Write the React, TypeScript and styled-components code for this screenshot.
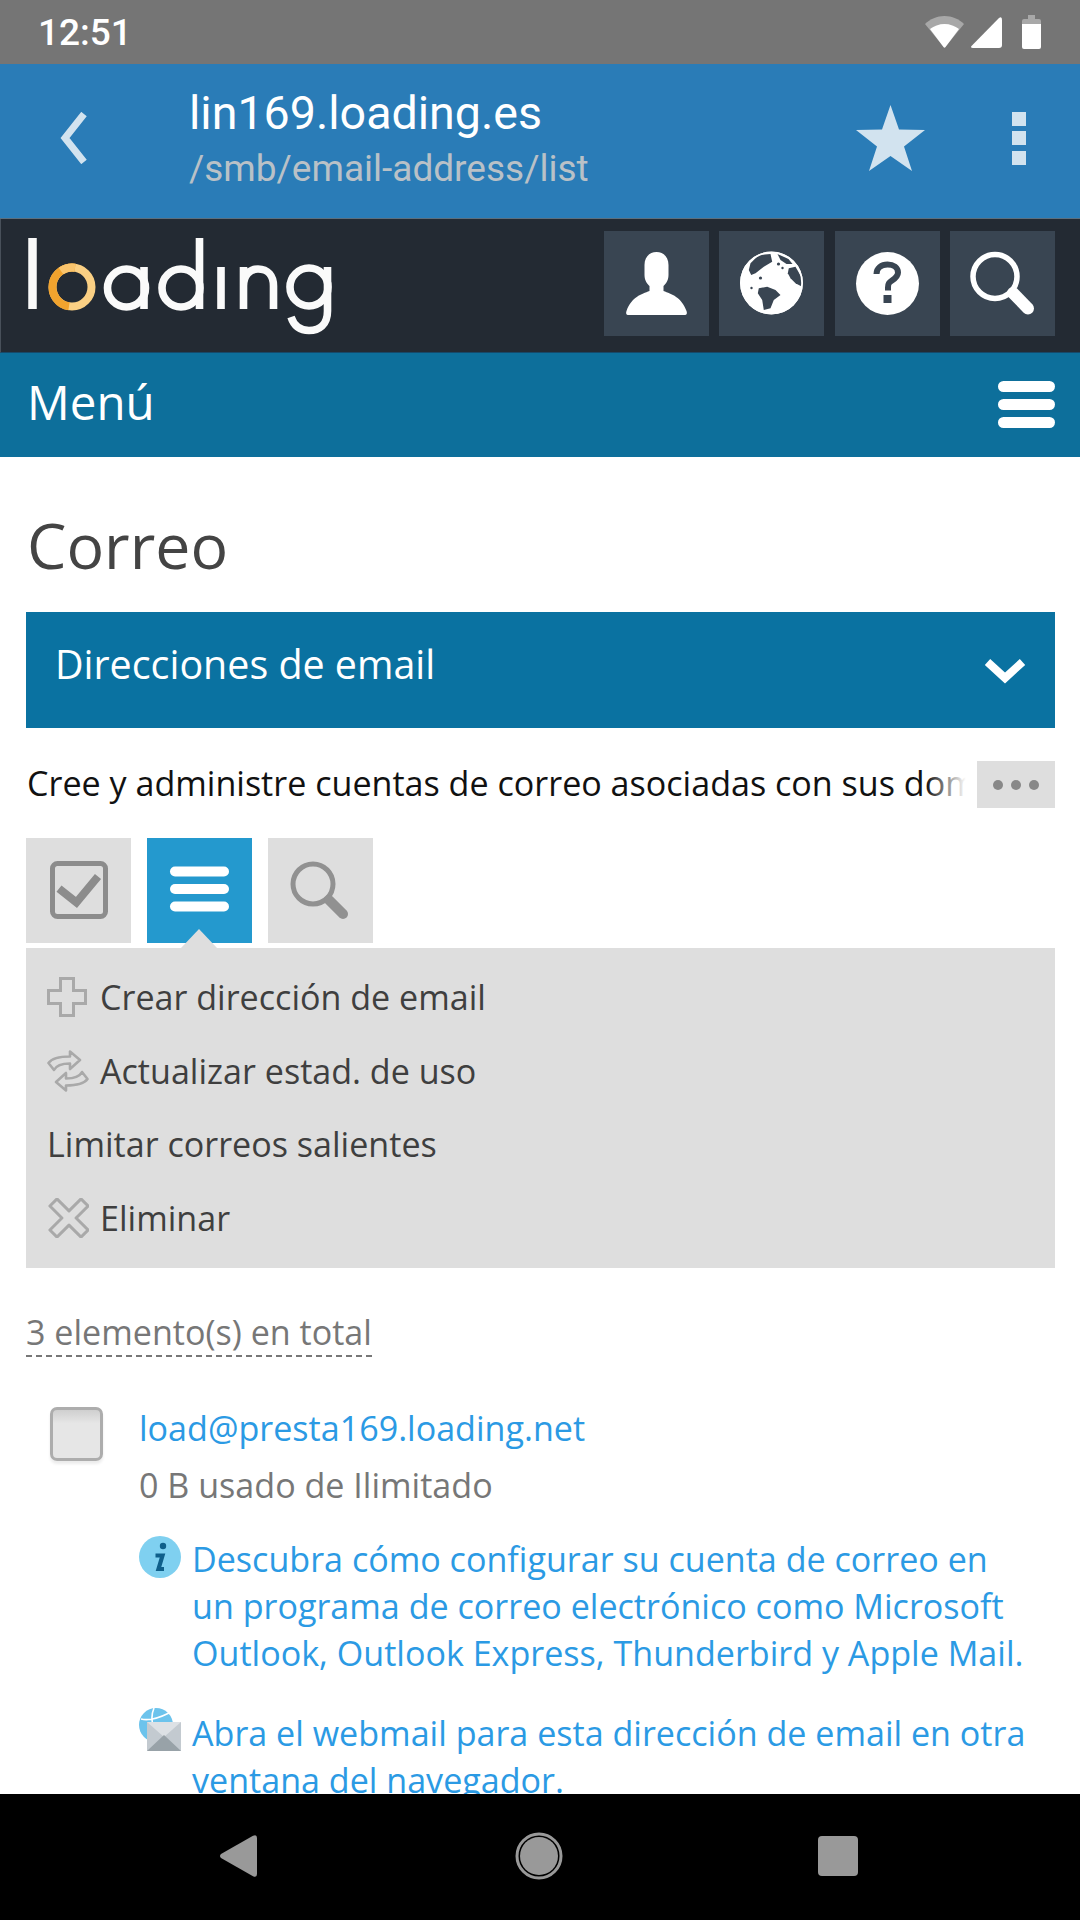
import React from "react";
import styled, { createGlobalStyle } from "styled-components";

const Global = createGlobalStyle`
  html, body { margin: 0; padding: 0; background: #fff; }
  * { box-sizing: border-box; }
`;

const Page = styled.div`
  width: 1080px; height: 1920px; display: flex; flex-direction: column; overflow: hidden;
  font-family: "Open Sans", "Liberation Sans", sans-serif; background: #fff;
`;
const StatusBar = styled.div`
  height: 64px; flex: none; background: #757575; display: flex; align-items: center;
  padding: 0 39px 0 38px; font-family: Roboto, sans-serif; font-weight: 500; font-size: 37px; color: #fff;
`;
const StatusIcons = styled.div`
  margin-left: auto; display: flex; align-items: center;
`;
const StatusIcon = styled.svg<{ $gap?: number }>`
  display: block; margin-left: ${(p) => p.$gap ?? 0}px;
`;
const AppBar = styled.div`
  height: 155px; flex: none; background: #2a7cb7; border-bottom: 1px solid #5b6f7f; display: flex; align-items: center;
  padding: 0 54px 0 60px; font-family: Roboto, sans-serif;
`;
const AppIcon = styled.svg<{ $auto?: boolean; $left?: number }>`
  display: block; flex: none; margin-bottom: 6px;
  margin-left: ${(p) => (p.$auto ? "auto" : `${p.$left ?? 0}px`)};
`;
const AppTitles = styled.div`
  margin-left: 101px; display: flex; flex-direction: column;
`;
const AppTitle = styled.div`
  font-size: 46.6px; line-height: 56px; color: #fff;
`;
const AppSub = styled.div`
  font-size: 37px; line-height: 56px; color: #b9c1c7;
`;
const Header = styled.div`
  height: 134px; flex: none; background: #232a33; border-left: 1px solid #48505a; border-bottom: 1px solid #16496a;
  display: flex; padding: 12px 25px 0 20px; align-items: flex-start;
`;
const Logo = styled.svg`
  display: block; flex: none; margin-top: 3px;
`;
const HeaderTools = styled.div`
  margin-left: auto; display: flex; gap: 10.33px;
`;
const HeaderTool = styled.div`
  width: 105px; height: 105px; background: #394552;
`;
const ToolSvg = styled.svg`
  display: block;
`;
const MenuBar = styled.div`
  height: 104px; flex: none; background: #0d6f9b; display: flex; align-items: center; justify-content: space-between;
  padding: 0 25px 2px 27px; color: #fff; font-size: 47.5px;
`;
const MenuLabel = styled.span`
  line-height: 56px; margin-top: -4px;
`;
const Content = styled.div`
  flex: 1; min-height: 0; overflow: hidden; padding: 0 25px 0 26px;
`;
const Title = styled.h1`
  margin: 53px 0 32px 1px; font-weight: 400; font-size: 62.6px; line-height: 70px; color: #444;
`;
const Section = styled.div`
  height: 116px; background: #0a72a1; color: #fff; font-size: 39.4px; display: flex; align-items: center;
  justify-content: space-between; padding: 0 29px 12px 29px;
`;
const SectionChevron = styled.svg`
  display: block; margin-top: 14px;
`;
const DescRow = styled.div`
  margin-top: 33px; height: 47px; display: flex; align-items: center;
`;
const DescText = styled.div`
  position: relative; flex: 1; min-width: 0; overflow: hidden; white-space: nowrap; font-size: 34.1px; color: #111;
  line-height: 47px; margin-right: 9px; padding-left: 1px; margin-top: -2px;
  &::after {
    content: ""; position: absolute; top: 0; right: 0; bottom: 0; width: 42px;
    background: linear-gradient(to right, rgba(255,255,255,0), #fff 95%);
  }
`;
const MoreButton = styled.div`
  width: 78px; height: 47px; flex: none; background: #dedede; display: flex; align-items: center; justify-content: center; gap: 8px;
`;
const MoreDot = styled.span`
  width: 10px; height: 10px; border-radius: 50%; background: #888;
`;
const Tabs = styled.div`
  margin-top: 30px; display: flex; gap: 16px;
`;
const Tab = styled.div<{ $active?: boolean }>`
  position: relative; width: 105px; height: 105px; background: ${(p) => (p.$active ? "#2499ce" : "#dedede")};
`;
const TabCaret = styled.span`
  position: absolute; left: 34px; bottom: -5px; width: 0; height: 0;
  border-left: 18px solid transparent; border-right: 18px solid transparent; border-bottom: 19px solid #dedede;
`;
const Menu = styled.div`
  margin-top: 5px; height: 320px; background: #dedede; padding: 12.5px 0 13px 21px;
`;
const MenuRow = styled.div`
  height: 73.6px; display: flex; align-items: center; font-size: 34.1px; color: #3f3f3f;
`;
const MenuIconSlot = styled.div`
  width: 53px; flex: none; display: flex;
`;
const Count = styled.div`
  display: inline-block; margin-top: 42px; height: 47px; line-height: 44px; font-size: 34.1px; color: #777;
  border-bottom: 2px dashed #777; vertical-align: top;
`;
const Item = styled.div`
  display: flex; margin-top: 48px; padding-left: 24px;
`;
const CheckBox = styled.div`
  width: 53px; height: 54px; flex: none; margin-top: 2px; border: 3px solid #adadad; border-radius: 7px;
  background: linear-gradient(#cfcfcf, #e6e6e6 28%, #e6e6e6); box-shadow: 0 3px 3px rgba(0,0,0,.08);
`;
const ItemBody = styled.div`
  margin-left: 36px; margin-right: 23px; flex: 1; min-width: 0;
`;
const ItemLink = styled.div`
  font-size: 34.1px; line-height: 46px; color: #2b9ae4;
`;
const ItemUsage = styled.div`
  margin-top: 11px; font-size: 34.1px; line-height: 46px; color: #777;
`;
const Note = styled.div<{ $top: number }>`
  margin-top: ${(p) => p.$top}px; display: flex; gap: 11px; font-size: 34.1px; line-height: 47px; color: #2b9ae4;
`;
const NoteIcon = styled.svg<{ $up?: number }>`
  display: block; flex: none; margin-top: ${(p) => -(p.$up ?? 0)}px;
`;
const NavBar = styled.div`
  height: 126px; flex: none; background: #000; display: flex; align-items: center; padding: 0 0 2px 220px;
`;
const NavIcon = styled.svg<{ $left?: number }>`
  display: block; margin-left: ${(p) => p.$left ?? 0}px;
`;

const GraySearch = () => (
  <ToolSvg width="105" height="105" viewBox="0 0 105 105" fill="none">
    <circle cx="45" cy="46" r="20" stroke="#919191" strokeWidth="5" />
    <path d="M61 62 L75 76" stroke="#919191" strokeWidth="10" strokeLinecap="round" />
  </ToolSvg>
);

const Hamburger = ({ x, y, w, h, gap, color = "#fff", size = 105 }: { x: number; y: number; w: number; h: number; gap: number; color?: string; size?: number }) => (
  <ToolSvg width={size} height={size} viewBox={`0 0 ${size} ${size}`}>
    {[0, 1, 2].map((i) => (
      <rect key={i} x={x} y={y + i * gap} width={w} height={h} rx={h / 2} fill={color} />
    ))}
  </ToolSvg>
);

export default function App() {
  return (
    <Page>
      <Global />
      <StatusBar>
        12:51
        <StatusIcons>
          <StatusIcon width="39" height="32" viewBox="0 0 39 32">
            <path d="M0 8 C5 3 12 0 19.5 0 S34 3 39 8 L19.5 32 Z" fill="#a8a8a8" />
            <path d="M5 13 C9 10 14 8 19.5 8 S30 10 34 13 L20.5 31 Q19.5 32 18.5 31 Z" fill="#fff" />
          </StatusIcon>
          <StatusIcon $gap={7} width="31" height="31" viewBox="0 0 31 31">
            <path d="M0.5 29 L28 1 Q31 -1 31 3 V28 Q31 31 28 31 H2 Q-1 31 0.5 29 Z" fill="#fff" />
          </StatusIcon>
          <StatusIcon $gap={20} width="19" height="34" viewBox="0 0 19 34">
            <path d="M6 0 H13 V4 H17 Q19 4 19 6 V9 H0 V6 Q0 4 2 4 H6 Z" fill="#a8a8a8" />
            <path d="M0 9 H19 V32 Q19 34 17 34 H2 Q0 34 0 32 Z" fill="#fff" />
          </StatusIcon>
        </StatusIcons>
      </StatusBar>

      <AppBar>
        <AppIcon width="28" height="52" viewBox="0 0 28 52" fill="none">
          <path d="M24 2 L5 26 L24 50" stroke="#d2e3ef" strokeWidth="7" />
        </AppIcon>
        <AppTitles>
          <AppTitle>lin169.loading.es</AppTitle>
          <AppSub>/smb/email-address/list</AppSub>
        </AppTitles>
        <AppIcon $auto width="69" height="66" viewBox="0 0 69 66">
          <path d="M34.5 0 L43 24.5 L69 25 L48 41.5 L56 66 L34.5 51 L13 66 L21 41.5 L0 25 L26 24.5 Z" fill="#d2e3ef" />
        </AppIcon>
        <AppIcon $left={87} width="14" height="53" viewBox="0 0 14 53">
          <rect y="0" width="14" height="14" fill="#d2e3ef" />
          <rect y="19" width="14" height="14" fill="#d2e3ef" />
          <rect y="39" width="14" height="14" fill="#d2e3ef" />
        </AppIcon>
      </AppBar>

      <Header>
        <Logo width="320" height="105" viewBox="20 235 320 105" fill="none" aria-label="loading">
          <g stroke="#fafafa" strokeWidth="7.6">
            <path d="M31.5 239 V310" strokeWidth="8.5" />
            <circle cx="125.5" cy="289" r="19" />
            <path d="M143 268 V310" />
            <circle cx="180" cy="289" r="19" />
            <path d="M198.5 239 V310" />
            <path d="M220 268 V310" />
            <path d="M242.5 268 V310 M242.5 287 C242.5 276 249 270 257 270 C267 270 272.5 277 272.5 287 V310" />
            <circle cx="308" cy="288" r="19" />
            <path d="M326.5 268 V312 C326.5 326 318 331.5 308 331.5 C299 331.5 293 327 290 318" />
          </g>
          <circle cx="71" cy="288" r="19.5" stroke="#fbd084" strokeWidth="8" />
          <path d="M74 268.7 A19.5 19.5 0 1 0 68 307.3" stroke="#f1a32e" strokeWidth="8" />
          <path d="M74 268.7 A19.5 19.5 0 0 0 60 272" stroke="#f9c46d" strokeWidth="8" />
        </Logo>
        <HeaderTools>
          <HeaderTool>
            <ToolSvg width="105" height="105" viewBox="0 0 105 105">
              <path d="M52.5 21 c-7 0 -12 5 -12 13 v10 c0 6 3 9 5 11 v5 c-8 3 -18 6 -23 20 c-1 3 0 4 3 4 h54 c3 0 4 -1 3 -4 c-5 -14 -15 -17 -23 -20 v-5 c2 -2 5 -5 5 -11 v-10 c0 -8 -5 -13 -12 -13 z" fill="#fff" />
            </ToolSvg>
          </HeaderTool>
          <HeaderTool>
            <ToolSvg width="105" height="105" viewBox="0 0 105 105">
              <g transform="translate(11.5 9)">
                <circle cx="41" cy="43" r="31.5" fill="#fff" />
                <g fill="#394552">
                  <path d="M28.3 48.3 L36.7 46.7 L45 50 L50 55 L43.3 60 L40 68.3 L33.3 70 L31.7 60 L27.3 53.3 Z" />
                  <path d="M58.3 28.3 L65 26.7 L70.7 36.7 L71.7 46.7 L65 43.3 L60 38.3 L57.3 33.3 Z" />
                  <path d="M20 23.3 L28.3 15 L40 14 L41.7 21.7 L33.3 26.7 L25 33.3 L20.7 35 L18.3 30 Z" />
                  <circle cx="48" cy="24" r="1.6" />
                  <circle cx="52" cy="28" r="1.2" />
                  <circle cx="21" cy="48" r="1.2" />
                  <circle cx="30" cy="38" r="1.6" />
                  <path d="M47 14 L58 19 L62 24 L56 24 L50 20 Z" />
                </g>
                <circle cx="41" cy="43" r="30.5" fill="none" stroke="#fff" strokeWidth="1.6" />
              </g>
            </ToolSvg>
          </HeaderTool>
          <HeaderTool>
            <ToolSvg width="105" height="105" viewBox="0 0 105 105" fill="none">
              <circle cx="52.5" cy="52.5" r="31.5" fill="#fff" />
              <path d="M41.5 43 c0 -6 5 -9.5 11 -9.5 c6 0 10.5 3 10.5 8 c0 4 -3 6 -6 8 c-3 2 -4 3 -4 7 v3" stroke="#394552" strokeWidth="6" />
              <rect x="48.5" y="64" width="8" height="8" fill="#394552" />
            </ToolSvg>
          </HeaderTool>
          <HeaderTool>
            <ToolSvg width="105" height="105" viewBox="0 0 105 105" fill="none">
              <circle cx="45" cy="45.5" r="22" stroke="#fff" strokeWidth="5.5" />
              <path d="M63 62 L78 77.5" stroke="#fff" strokeWidth="12" strokeLinecap="round" />
            </ToolSvg>
          </HeaderTool>
        </HeaderTools>
      </Header>

      <MenuBar>
        <MenuLabel>Menú</MenuLabel>
        <ToolSvg width="57" height="47" viewBox="0 0 57 47">
          <rect y="0" width="57" height="11" rx="5.5" fill="#fff" />
          <rect y="18" width="57" height="11" rx="5.5" fill="#fff" />
          <rect y="36" width="57" height="11" rx="5.5" fill="#fff" />
        </ToolSvg>
      </MenuBar>

      <Content>
        <Title>Correo</Title>
        <Section>
          Direcciones de email
          <SectionChevron width="42" height="26" viewBox="0 0 42 26" fill="none">
            <path d="M3.5 4 L21 20 L38.5 4" stroke="#fff" strokeWidth="8" />
          </SectionChevron>
        </Section>
        <DescRow>
          <DescText>Cree y administre cuentas de correo asociadas con sus dominios de Internet</DescText>
          <MoreButton>
            <MoreDot />
            <MoreDot />
            <MoreDot />
          </MoreButton>
        </DescRow>
        <Tabs>
          <Tab>
            <ToolSvg width="105" height="105" viewBox="0 0 105 105" fill="none">
              <rect x="26.5" y="25.5" width="53" height="53" rx="5" stroke="#8c8c8c" strokeWidth="5" />
              <path d="M33 50.6 L50.4 64.5 L72 38.5" stroke="#8c8c8c" strokeWidth="8" />
            </ToolSvg>
          </Tab>
          <Tab $active>
            <Hamburger x={23} y={28.5} w={59} h={10} gap={17.5} />
            <TabCaret />
          </Tab>
          <Tab>
            <GraySearch />
          </Tab>
        </Tabs>
        <Menu>
          <MenuRow>
            <MenuIconSlot>
              <ToolSvg width="40" height="40" viewBox="0 0 40 40" fill="none">
                <path d="M13.5 1.5 h13 v12 h12 v13 h-12 v12 h-13 v-12 h-12 v-13 h12 z" stroke="#a9a9a9" strokeWidth="3" />
              </ToolSvg>
            </MenuIconSlot>
            Crear dirección de email
          </MenuRow>
          <MenuRow>
            <MenuIconSlot>
              <ToolSvg width="42" height="42" viewBox="0 0 42 42" fill="none" stroke="#a9a9a9" strokeWidth="2.6" strokeLinejoin="round">
                <path d="M1.5 13 C5 8 12 6.5 23 6.5 V1.5 L33 10 L23 19 V13.5 C14 13.5 9 16 7 20 Z" />
                <path d="M40.5 29 C37 34 30 35.5 19 35.5 V40.5 L9 32 L19 23 V28.5 C28 28.5 33 26 35 22 Z" />
              </ToolSvg>
            </MenuIconSlot>
            Actualizar estad. de uso
          </MenuRow>
          <MenuRow>Limitar correos salientes</MenuRow>
          <MenuRow>
            <MenuIconSlot>
              <ToolSvg width="42" height="40" viewBox="-2 0 42 40" fill="none">
                <path transform="translate(20 20) rotate(45)" d="M-5 -22 h10 v17 h17 v10 h-17 v17 h-10 v-17 h-17 v-10 h17 z" stroke="#a9a9a9" strokeWidth="3" strokeLinejoin="round" />
              </ToolSvg>
            </MenuIconSlot>
            Eliminar
          </MenuRow>
        </Menu>
        <Count>3 elemento(s) en total</Count>
        <Item>
          <CheckBox />
          <ItemBody>
            <ItemLink>load@presta169.loading.net</ItemLink>
            <ItemUsage>0 B usado de Ilimitado</ItemUsage>
            <Note $top={28}>
              <NoteIcon width="42" height="42" viewBox="0 0 42 42" fill="none">
                <circle cx="21" cy="21" r="21" fill="#7fd0f0" />
                <circle cx="24" cy="10" r="3.2" fill="#0f5f8a" />
                <path d="M16.5 19.5 H23.5 L19.5 33 H25" stroke="#0f5f8a" strokeWidth="4.2" />
              </NoteIcon>
              <span>Descubra cómo configurar su cuenta de correo en un programa de correo electrónico como Microsoft Outlook, Outlook Express, Thunderbird y Apple Mail.</span>
            </Note>
            <Note $top={33}>
              <NoteIcon $up={3} width="42" height="46" viewBox="0 0 42 46" fill="none">
                <circle cx="17" cy="18" r="17" fill="#6cc3ec" />
                <path d="M2 12 C10 14 22 10 30 6 M15 1 C12 8 12 14 15 22" stroke="#fff" strokeWidth="1.6" />
                <rect x="8" y="15" width="34" height="29" fill="#c3cad0" />
                <path d="M8 15 H42 L25 30 Z" fill="#dde1e5" />
                <path d="M8 44 L25 28 L42 44 Z" fill="#98a2a8" />
              </NoteIcon>
              <span>Abra el webmail para esta dirección de email en otra ventana del navegador.</span>
            </Note>
          </ItemBody>
        </Item>
      </Content>

      <NavBar>
        <NavIcon width="37" height="42" viewBox="0 0 37 42">
          <path d="M1 19 L33 0.8 Q37 -1 37 3 V39 Q37 43 33 41.2 L1 23 Q-1 21 1 19 Z" fill="#999" />
        </NavIcon>
        <NavIcon $left={258} width="48" height="48" viewBox="0 0 48 48">
          <circle cx="24" cy="24" r="22" fill="none" stroke="#999" strokeWidth="3" />
          <circle cx="24" cy="24" r="19" fill="#999" />
        </NavIcon>
        <NavIcon $left={255} width="40" height="40" viewBox="0 0 40 40">
          <rect width="40" height="40" rx="4" fill="#999" />
        </NavIcon>
      </NavBar>
    </Page>
  );
}
